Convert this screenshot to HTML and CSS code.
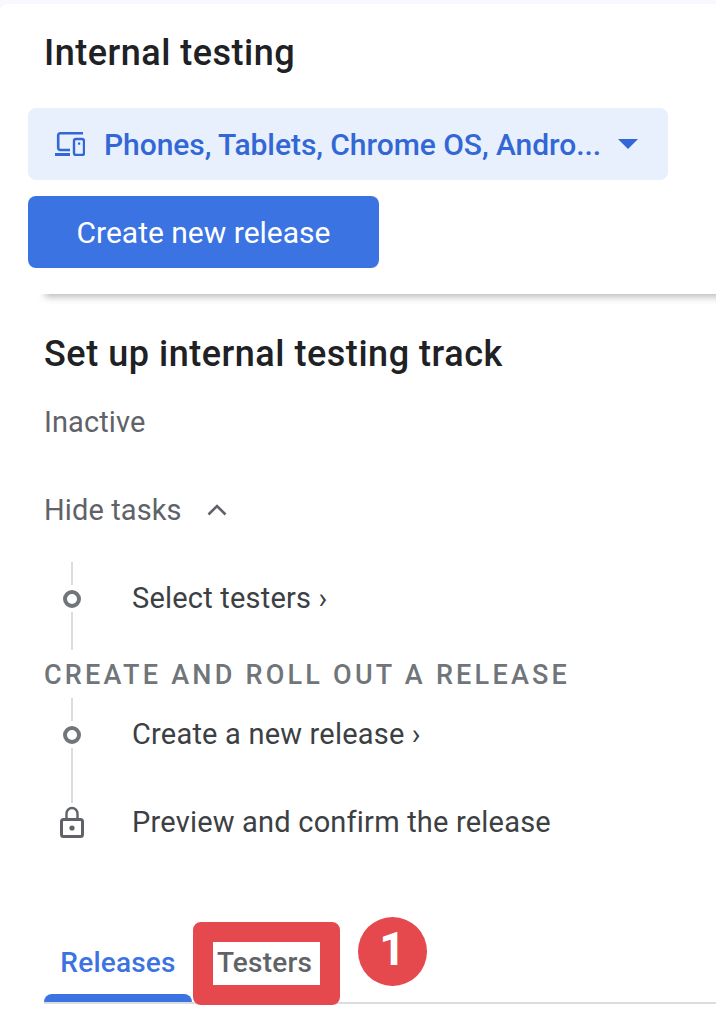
FILE: index.html
```html
<!DOCTYPE html>
<html lang="en">
<head>
<meta charset="utf-8">
<title>Internal testing</title>
<link rel="stylesheet" href="styles.css">
</head>
<body>
<main class="card">
  <header class="head">
    <h1 class="title">Internal testing</h1>
    <button class="select">
      <svg class="device" viewBox="0 0 30 24" width="30" height="24"><path d="M28 1.3H5.2A2 2 0 0 0 3.2 3.3V16A2 2 0 0 0 5.2 18H15" fill="none" stroke="currentColor" stroke-width="2.6"/><rect x="0" y="21" width="15" height="3" fill="currentColor"/><rect x="19" y="7" width="10" height="16" rx="2" fill="none" stroke="currentColor" stroke-width="2.4"/><rect x="23" y="10.5" width="2.2" height="2.2" fill="currentColor"/></svg>
      <span class="select-text">Phones, Tablets, Chrome OS, Andro...</span>
      <span class="caret"></span>
    </button>
    <button class="primary">Create new release</button>
  </header>
  <section class="setup">
    <h2 class="subtitle">Set up internal testing track</h2>
    <p class="status">Inactive</p>
    <div class="toggle">
      <span>Hide tasks</span>
      <svg viewBox="0 0 20 12" width="20" height="12"><path d="M1.5 10.5L10 2l8.5 8.5" fill="none" stroke="#5f6368" stroke-width="2.6"/></svg>
    </div>
    <div class="task">
      <div class="rail"><span class="line first"></span><span class="dot"></span><span class="line"></span></div>
      <span class="task-text">Select testers ›</span>
    </div>
    <div class="group">CREATE AND ROLL OUT A RELEASE</div>
    <div class="task long">
      <div class="rail"><span class="line first"></span><span class="dot"></span><span class="line"></span></div>
      <span class="task-text">Create a new release ›</span>
    </div>
    <div class="task last">
      <div class="rail">
        <svg class="lock" viewBox="0 0 24 32" width="24" height="32"><path d="M6.5 13V7.5a5.5 5.5 0 0 1 11 0V13" fill="none" stroke="#5f6368" stroke-width="2.4"/><rect x="1.5" y="13.5" width="21" height="17" rx="2" fill="none" stroke="#5f6368" stroke-width="3"/><circle cx="12" cy="22" r="2.6" fill="#5f6368"/></svg>
      </div>
      <span class="task-text">Preview and confirm the release</span>
    </div>
  </section>
  <nav class="tabs">
    <div class="tab active">Releases</div>
    <div class="tab mark"><span class="mark-inner">Testers</span></div>
    <div class="badge">1</div>
  </nav>
</main>
</body>
</html>
```
FILE: styles.css
```css
* { box-sizing: border-box; }
html, body { margin: 0; height: 1030px; overflow: hidden; }
body { background: #f8f9fe; padding-top: 4px; font-family: Roboto, "Liberation Sans", sans-serif; color: #202124; }
.card { background: #fff; border-radius: 8px 0 0 0; height: 1026px; overflow: hidden; }
.head { height: 290px; padding-left: 28px; position: relative; z-index: 0; }
.head::after { content: ""; position: absolute; z-index: -1; left: 44px; right: -20px; top: 0; bottom: 0; box-shadow: 0 4px 7px -1px rgba(60,64,67,.35); clip-path: inset(100% 0 -20px -12px); }
.title { margin: 0 0 0 16px; padding-top: 28px; font-size: 36px; line-height: 42px; font-weight: 500; color: #202124; letter-spacing: .5px; }
.select { display: flex; align-items: center; width: 640px; height: 72px; margin: 34px 0 0; padding: 0 30px 0 27px; background: #e8f0fd; border: 0; border-radius: 8px; color: #3367d6; font: 500 30px Roboto, sans-serif; letter-spacing: -.05px; }
.device { flex: none; margin-right: 19px; }
.select-text { white-space: nowrap; flex: 1; text-align: left; }
.caret { width: 0; height: 0; border-left: 10px solid transparent; border-right: 10px solid transparent; border-top: 10px solid #3367d6; }
.primary { display: block; width: 351px; height: 72px; margin: 16px 0 0; background: #3b73e2; border: 0; border-radius: 8px; color: #fff; font: 400 30px Roboto, sans-serif; }
.setup { padding: 38px 0 0 44px; }
.subtitle { margin: 0; font-size: 36px; line-height: 44px; font-weight: 500; color: #202124; letter-spacing: .53px; }
.status { margin: 24px 0 0; font-size: 29px; line-height: 44px; color: #5f6368; letter-spacing: .1px; }
.toggle { display: flex; align-items: center; gap: 25px; margin: 44px 0 30px; font-size: 29px; line-height: 44px; color: #5f6368; letter-spacing: .1px; }
.task { display: flex; align-items: flex-start; height: 88px; }
.long { height: 105px; }
.last { height: 38px; }
.rail { width: 56px; flex: none; display: flex; flex-direction: column; align-items: center; height: 100%; }
.line { flex: 1; width: 2px; background: #dadce0; }
.line.first { flex: none; height: 23px; }
.dot { width: 18px; height: 18px; border: 4px solid #70757a; border-radius: 50%; margin: 5px 0 4px; }
.task-text { margin-left: 32px; font-size: 29px; line-height: 72px; color: #3c4043; letter-spacing: .2px; white-space: nowrap; }
.last .task-text { line-height: 38px; }
.lock { margin-top: 3px; flex: none; }
.group { height: 48px; padding-top: 1px; font-size: 27px; line-height: 48px; font-weight: 500; letter-spacing: 3.23px; color: #70757a; }
.tabs { display: flex; align-items: flex-start; margin: 76px 0 0 44px; height: 87px; border-bottom: 2px solid #dadce0; }
.tab { font-size: 28px; font-weight: 500; letter-spacing: .2px; }
.active { position: relative; width: 148px; height: 85px; color: #3b73e2; text-align: center; padding-top: 24px; line-height: 44px; }
.active::after { content: ""; position: absolute; left: 0; right: 0; bottom: 0; height: 8px; background: #3b73e2; border-radius: 8px 8px 0 0; }
.mark { flex: none; margin: 5px 0 0 1px; width: 147px; height: 83px; border: 20px solid #e5494e; border-radius: 8px; color: #5f6368; }
.mark-inner { display: block; padding-right: 4px; text-align: center; line-height: 41px; }
.badge { flex: none; width: 69px; height: 69px; margin-left: 18px; border-radius: 50%; background: #e5494e; color: #fff; font-size: 46px; font-weight: 700; text-align: center; line-height: 64px; }
```
